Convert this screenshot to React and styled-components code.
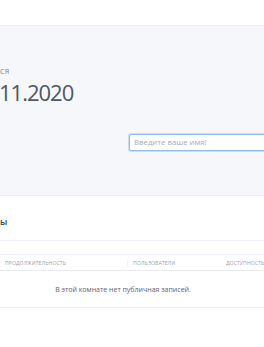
import React from "react";
import styled, { createGlobalStyle } from "styled-components";

const Global = createGlobalStyle`
  html, body { margin: 0; padding: 0; background: #fff; }
  body { font-family: "Source Sans Pro", "Open Sans", "Liberation Sans", sans-serif; overflow: hidden; }
  * { box-sizing: border-box; }
`;

const Page = styled.div`
  width: 264px;
  height: 347px;
  overflow: hidden;
  display: flex;
  flex-direction: column;
`;

const TopBar = styled.div`
  height: 26px;
  background: #fff;
  border-bottom: 1px solid #eef0f4;
`;

const Hero = styled.section`
  height: 170px;
  background: #f5f7fb;
  border-bottom: 1px solid #eceef2;
  display: grid;
  grid-template-columns: 129px 1fr;
  padding-top: 41px;
`;

const HeroLeft = styled.div`
  display: flex;
  flex-direction: column;
`;

const SmallLabel = styled.div`
  font-size: 7px;
  line-height: 10px;
  color: #7b8291;
  text-transform: uppercase;
  letter-spacing: 0.3px;
`;

const DateText = styled.div`
  font-size: 22px;
  line-height: 30px;
  color: #505662;
  font-weight: 400;
  margin-left: -1px;
  letter-spacing: -1px;
`;

const HeroRight = styled.div`
  padding-top: 61px;
`;

const NameInput = styled.input`
  width: 150px;
  height: 17px;
  border: 1px solid #8ec0e8;
  border-radius: 2px;
  background: #fff;
  box-shadow: 0 0 0 1px rgba(120, 175, 225, 0.35);
  font-family: inherit;
  font-size: 7.8px;
  padding: 0 4px;
  color: #495057;
  outline: none;
  &::placeholder { color: #a7adb8; }
`;

const Section = styled.section`
  display: flex;
  flex-direction: column;
  padding-top: 20px;
`;

const SectionTitle = styled.div`
  font-size: 9px;
  line-height: 12px;
  font-weight: 600;
  color: #3d4350;
  height: 24px;
`;

const Table = styled.div`
  border-top: 1px solid #eef0f3;
  padding-top: 13px;
`;

const HeadRow = styled.div`
  display: grid;
  grid-template-columns: 128px 93px 1fr;
  height: 17px;
  align-items: center;
  border-top: 1px solid #eef0f3;
  border-bottom: 1px solid #e9ebef;
`;

const HeadCell = styled.div`
  font-size: 5.1px;
  color: #9aa0ab;
  text-transform: uppercase;
  letter-spacing: 0.1px;
  padding-left: ${(p) => p.$pad || 0}px;
  white-space: nowrap;
  border-right: ${(p) => (p.$divider ? "1px solid #f1f2f5" : "none")};
  line-height: 6px;
`;

const EmptyRow = styled.div`
  height: 37px;
  display: flex;
  align-items: center;
  justify-content: center;
  border-bottom: 1px solid #eef0f3;
  font-size: 7px;
  color: #5d636f;
  padding-right: 18px;
`;

export default function App() {
  return (
    <>
      <Global />
      <Page>
        <TopBar />
        <Hero>
          <HeroLeft>
            <SmallLabel>ся</SmallLabel>
            <DateText>11.2020</DateText>
          </HeroLeft>
          <HeroRight>
            <NameInput placeholder="Введите ваше имя!" />
          </HeroRight>
        </Hero>
        <Section>
          <SectionTitle>ы</SectionTitle>
          <Table>
            <HeadRow>
              <HeadCell $pad={5} $divider>Продолжительность</HeadCell>
              <HeadCell $pad={5}>Пользователи</HeadCell>
              <HeadCell $pad={5}>Доступность</HeadCell>
            </HeadRow>
            <EmptyRow>В этой комнате нет публичная записей.</EmptyRow>
          </Table>
        </Section>
      </Page>
    </>
  );
}
